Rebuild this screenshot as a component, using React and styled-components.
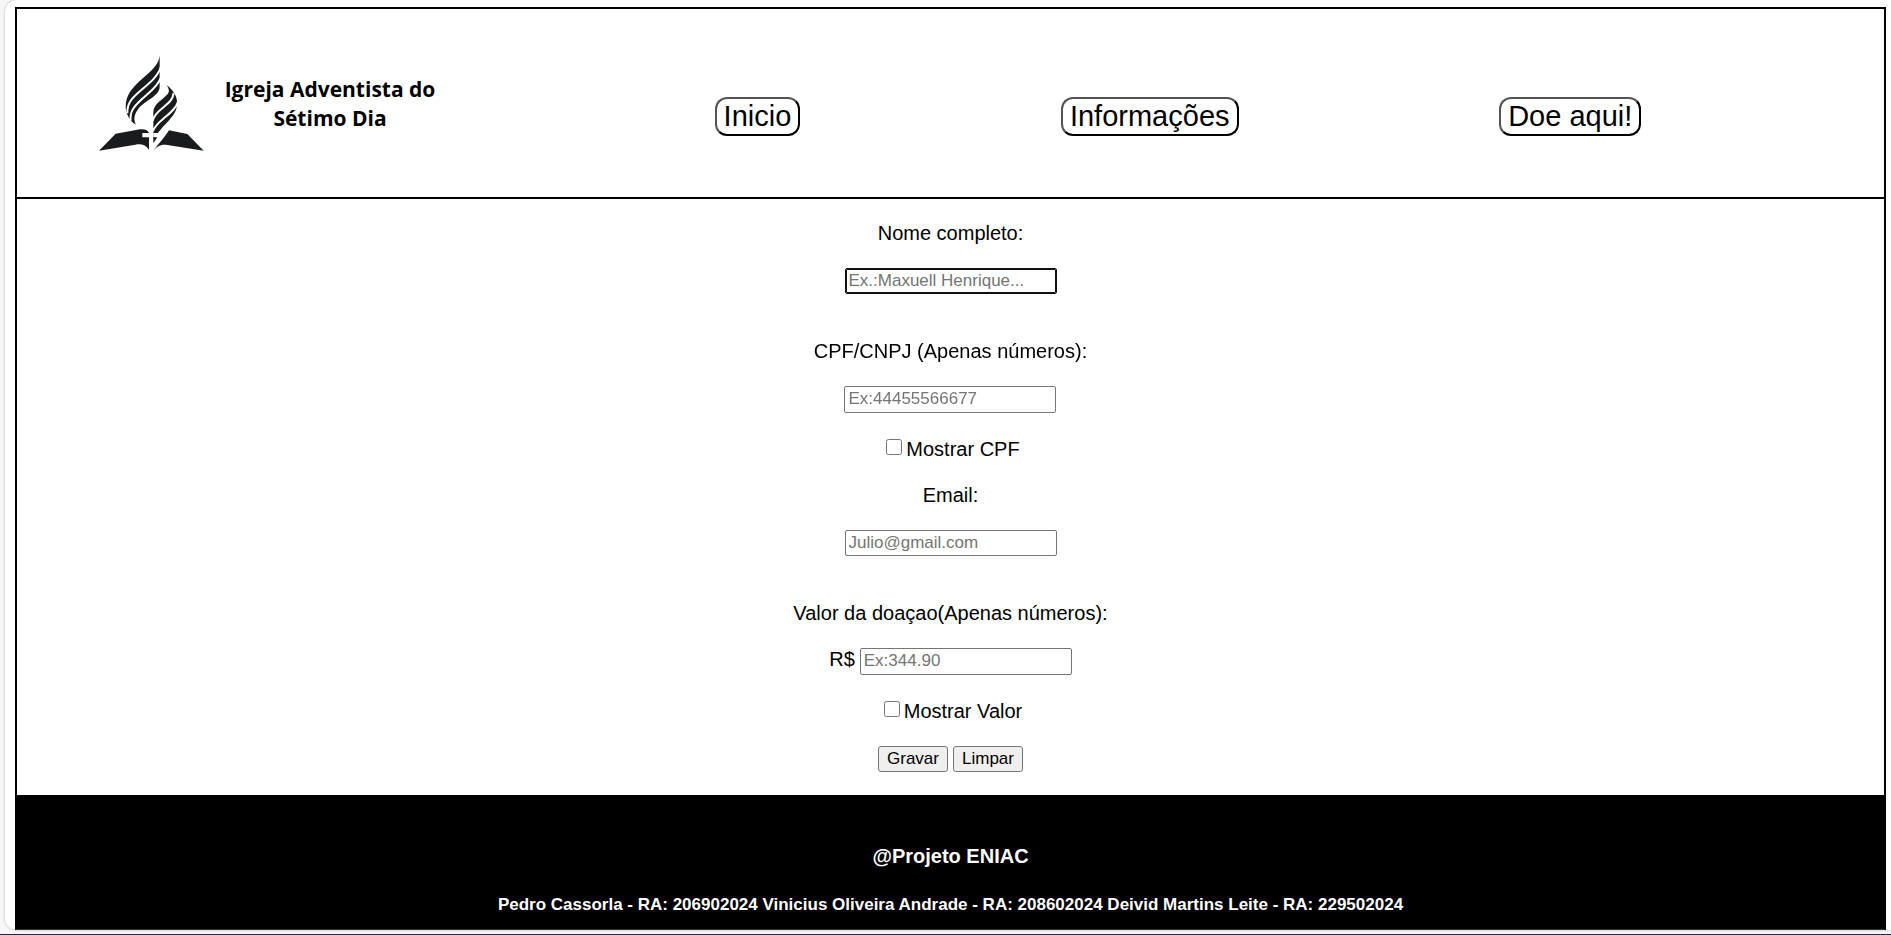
import React from 'react';
import styled, { createGlobalStyle } from 'styled-components';

const GlobalStyle = createGlobalStyle`
  * { box-sizing: border-box; }
  body {
    margin: 0;
    background: #f7f7f7;
    color: #000;
    font-family: "Liberation Sans", Arial, sans-serif;
    font-size: 20px;
    line-height: 24px;
  }
`;

const Page = styled.div`
  display: flex;
  flex-direction: column;
  min-height: 100vh;
  padding-left: 5px;
`;

const Card = styled.div`
  flex: 1;
  display: flex;
  flex-direction: column;
  padding: 7px 5px 0 10px;
  background: #fff;
  border-radius: 12px 0 0 12px;
  box-shadow: 0 0 3px rgba(0, 0, 0, 0.25);
`;

const Frame = styled.div`
  flex: 1;
  display: flex;
  flex-direction: column;
  border: 2px solid #000;
  border-bottom: 1px solid #333;
`;

const Header = styled.header`
  display: flex;
  align-items: flex-start;
  height: 190px;
  padding: 47px 13% 0 82px;
  border-bottom: 2px solid #000;
`;

const Brand = styled.a`
  display: flex;
  gap: 19px;
  color: #000;
  text-decoration: none;
`;

const BrandName = styled.span`
  width: 214px;
  padding-top: 19px;
  font-family: "Open Sans", sans-serif;
  font-size: 21px;
  font-weight: 700;
  line-height: 29px;
  text-align: center;
`;

const Nav = styled.nav`
  flex: 1;
  display: flex;
  justify-content: space-between;
  padding: 41px 0 0 18%;
`;

const NavButton = styled.button`
  height: 39px;
  padding: 0 7px 1px;
  background: #fff;
  border: 2px outset #000;
  border-radius: 12px;
  color: #000;
  font-family: inherit;
  font-size: 29px;
  line-height: 33px;
`;

const Form = styled.form`
  display: flex;
  flex-direction: column;
  align-items: center;
  gap: 23px;
  padding: 22px 0 23px;
`;

const Field = styled.div`
  display: flex;
  flex-direction: column;
  align-items: center;
  gap: 23px;
  margin-bottom: ${(p) => (p.$spaced ? '22px' : '0')};
`;

const InputRow = styled.div`
  display: flex;
  gap: 5px;
  line-height: 22px;
`;

const Input = styled.input`
  width: 212px;
  height: ${(p) => (p.$tall ? '27px' : '26px')};
  padding: 0 3px 1px;
  background: #fff;
  border: 1px solid #767676;
  border-radius: 2px;
  font-family: inherit;
  font-size: 17px;
  &::placeholder { color: #757575; }
  &:focus { outline: 1px solid #101010; border-color: #101010; outline-offset: -2px; }
`;

const CheckRow = styled.div`
  display: flex;
  gap: 4px;
  height: 24px;
  padding-left: 5px;
  line-height: 26px;
`;

const Checkbox = styled.input`
  width: 16px;
  height: 16px;
  margin: 3px 0 0;
`;

const Actions = styled.div`
  display: flex;
  gap: 5px;
  padding-top: 1px;
`;

const ActionButton = styled.button`
  width: 70px;
  height: 26px;
  padding: 0;
  background: #efefef;
  border: 1px solid #767676;
  border-radius: 3px;
  color: #000;
  font-family: inherit;
  font-size: 17px;
`;

const Footer = styled.footer`
  flex: 1;
  padding: 49px 0 12px;
  background: #000;
  color: #fff;
  text-align: center;
`;

const Project = styled.h3`
  margin: 0 0 25px;
  font-size: 20px;
  line-height: 24px;
`;

const Authors = styled.h4`
  margin: 0;
  font-size: 17px;
  line-height: 24px;
`;

const BottomLine = styled.div`
  height: 1px;
  margin: 4px 0 0 -5px;
  background: #3a1a40;
`;

function Logo() {
  return (
    <svg width="105" height="95" viewBox="27 32 315 285" fill="#1a1b1d" aria-hidden="true">
      <path d="M209 30C206 60 184 76 155 102C125 129 107 150 107 185C108 210 122 228 137 238C130 222 132 208 145 190C165 165 209 152 209 124Z" />
      <path d="M230 120C250 134 264 155 261 180C258 215 225 230 190 282V200C192 178 208 170 223 156C240 142 240 136 230 120Z" />
      <g fill="none" stroke="#fff" strokeWidth="6">
        <path d="M212 66C204 95 172 118 147 140C122 162 111 176 112 204" />
        <path d="M212 98C204 124 175 143 152 165C130 186 119 200 122 226" />
        <path d="M251 143C248 165 235 173 215 190C200 202 192 212 188 226" />
        <path d="M264 169C258 190 240 203 220 220C205 232 194 245 188 258" />
      </g>
      <path d="M27 316L77 265L142 253C160 250 172 252 177 263H157V276H177V314C168 299 154 295 136 298Z" />
      <path d="M190 263H205L199 276H190Z" fill="#fff" />
      <path d="M190 276H202L190 294ZM190 316C202 300 218 284 237 255L292 266L341 316L232 299C212 296 200 304 190 316Z" />
    </svg>
  );
}

export default function App() {
  return (
    <>
      <GlobalStyle />
      <Page>
        <Card>
          <Frame>
            <Header>
              <Brand href="#">
                <Logo />
                <BrandName>Igreja Adventista do Sétimo Dia</BrandName>
              </Brand>
              <Nav>
                <NavButton type="button">Inicio</NavButton>
                <NavButton type="button">Informações</NavButton>
                <NavButton type="button">Doe aqui!</NavButton>
              </Nav>
            </Header>
            <Form>
              <Field $spaced>
                <label htmlFor="nome">Nome completo:</label>
                <Input id="nome" type="text" placeholder="Ex.:Maxuell Henrique..." autoFocus />
              </Field>
              <Field>
                <label htmlFor="cpf">CPF/CNPJ (Apenas números):</label>
                <Input id="cpf" type="text" inputMode="numeric" placeholder="Ex:44455566677" $tall />
              </Field>
              <CheckRow>
                <Checkbox id="mostrar-cpf" type="checkbox" />
                <label htmlFor="mostrar-cpf">Mostrar CPF</label>
              </CheckRow>
              <Field $spaced>
                <label htmlFor="email">Email:</label>
                <Input id="email" type="email" placeholder="Julio@gmail.com" />
              </Field>
              <Field>
                <label htmlFor="valor">Valor da doaçao(Apenas números):</label>
                <InputRow>
                  <span>R$</span>
                  <Input id="valor" type="text" inputMode="decimal" placeholder="Ex:344.90" $tall />
                </InputRow>
              </Field>
              <CheckRow>
                <Checkbox id="mostrar-valor" type="checkbox" />
                <label htmlFor="mostrar-valor">Mostrar Valor</label>
              </CheckRow>
              <Actions>
                <ActionButton type="submit">Gravar</ActionButton>
                <ActionButton type="reset">Limpar</ActionButton>
              </Actions>
            </Form>
            <Footer>
              <Project>@Projeto ENIAC</Project>
              <Authors>
                Pedro Cassorla - RA: 206902024 Vinicius Oliveira Andrade - RA: 208602024 Deivid Martins Leite - RA: 229502024
              </Authors>
            </Footer>
          </Frame>
        </Card>
        <BottomLine />
      </Page>
    </>
  );
}
